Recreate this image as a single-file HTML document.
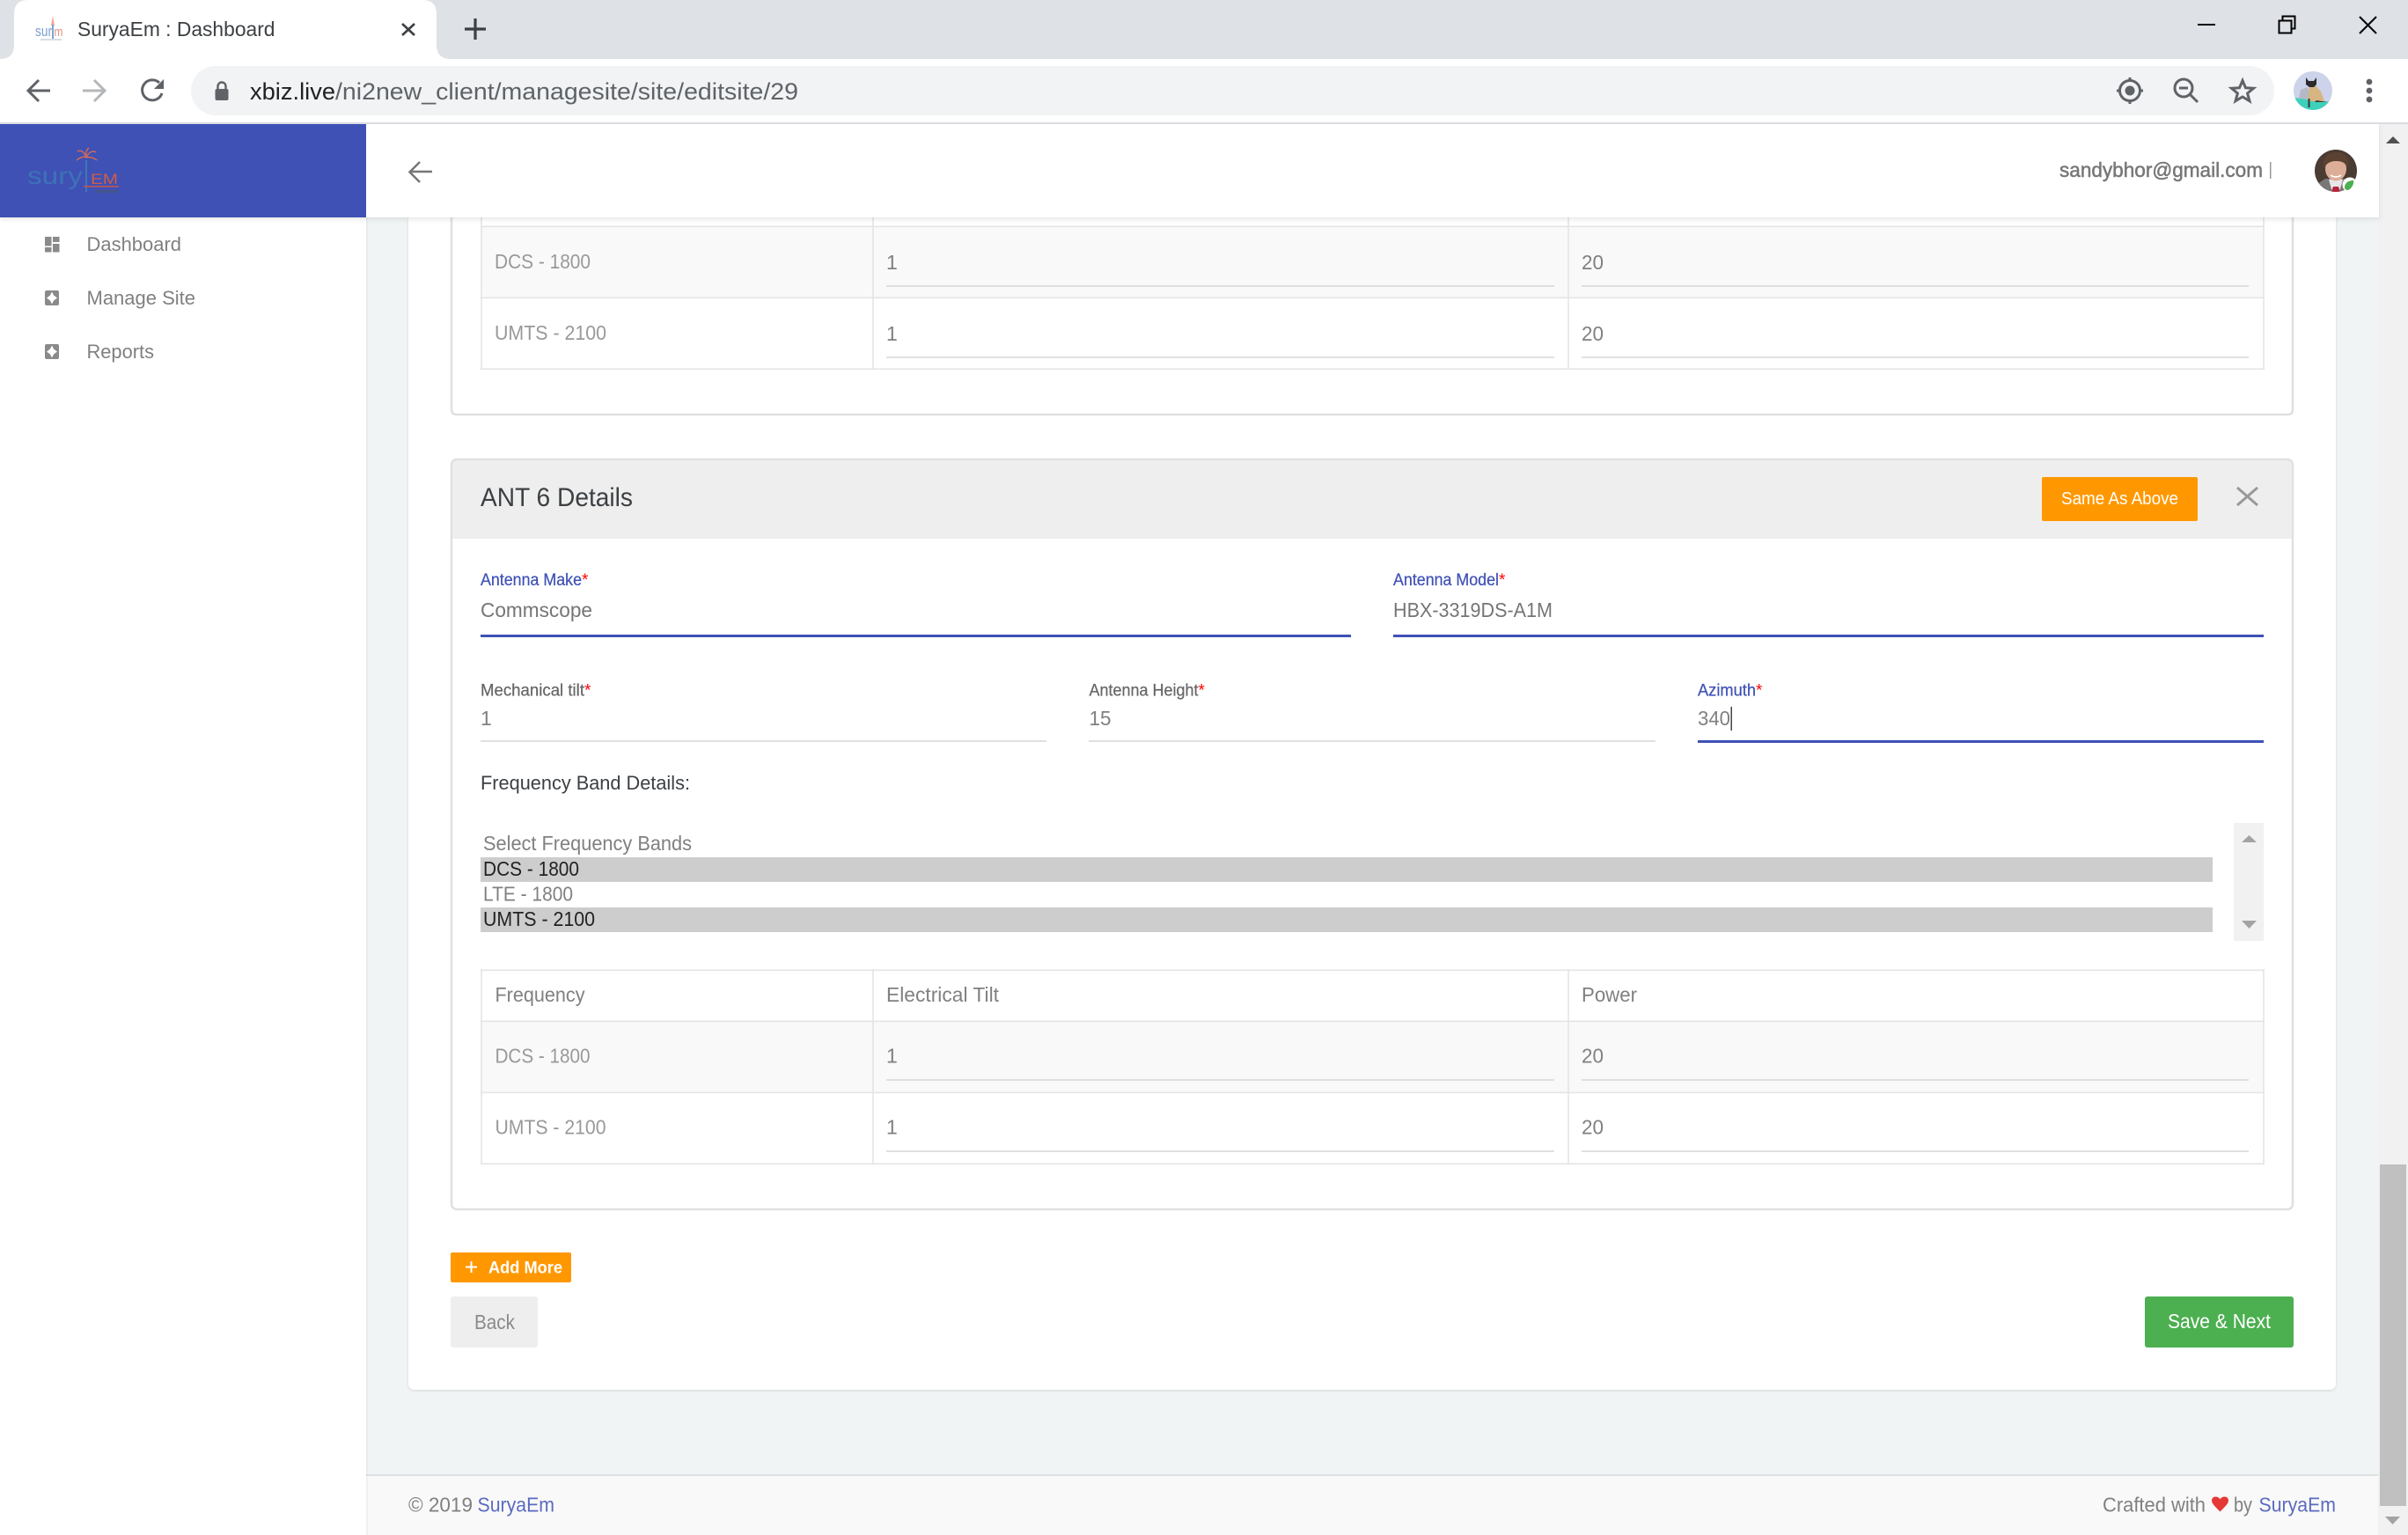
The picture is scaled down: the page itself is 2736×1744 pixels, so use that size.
<!DOCTYPE html>
<html lang="en"><head><meta charset="utf-8"><title>SuryaEm : Dashboard</title>
<style>
html,body{margin:0;padding:0;width:2736px;height:1744px;overflow:hidden;background:#f1f4f5}
svg{display:block}
text{font-family:"Liberation Sans",sans-serif;white-space:pre}
.g{fill:#808080}.l{fill:#999}.d{fill:#3c4043}.b{fill:#3f51b5}.r{fill:#f00}.w{fill:#fff}.m{fill:#666}.k{fill:#222}
.ln{fill:#e0e0e0}.tl{fill:#e4e4e4}
.lb{stroke:currentColor;stroke-width:.25}
</style></head><body>
<svg xmlns="http://www.w3.org/2000/svg" width="2736" height="1744" viewBox="0 0 2736 1744">
<defs>
<filter id="s1" x="-2%" y="-20%" width="104%" height="150%"><feDropShadow dx="0" dy="2" stdDeviation="3" flood-color="#000" flood-opacity=".1"/></filter>
<filter id="s2" x="-2%" y="-2%" width="104%" height="104%"><feDropShadow dx="0" dy="1" stdDeviation="1.5" flood-color="#000" flood-opacity=".12"/></filter>
<clipPath id="cat"><circle cx="2628" cy="103" r="22"/></clipPath>
<clipPath id="per"><circle cx="2654" cy="194" r="24"/></clipPath>
</defs>

<!-- page background -->
<rect x="0" y="141" width="2736" height="1603" fill="#f1f4f5"/>

<!-- main card -->
<rect x="464" y="100" width="2190" height="1479" rx="7" fill="#fff" filter="url(#s2)"/>

<!-- upper panel -->
<path d="M513 200V465q0 6 6 6H2599q6 0 6-6V200" fill="#fff" stroke="#e0e0e0" stroke-width="2.5"/>
<rect x="546" y="258" width="2026" height="80" fill="#f9f9f9"/>
<g class="tl">
<rect x="546" y="256.5" width="2027" height="1.6"/><rect x="546" y="337.5" width="2027" height="1.6"/><rect x="546" y="418.5" width="2027" height="1.6"/>
<rect x="546.2" y="200" width="1.6" height="220"/><rect x="991.2" y="200" width="1.6" height="220"/><rect x="1781.2" y="200" width="1.6" height="220"/><rect x="2571.2" y="200" width="1.6" height="220"/>
</g>
<text class="l" x="562" y="305" font-size="23" textLength="109" lengthAdjust="spacingAndGlyphs">DCS - 1800</text>
<text class="l" x="562" y="386" font-size="23" textLength="127" lengthAdjust="spacingAndGlyphs">UMTS - 2100</text>
<text class="g" x="1007" y="306" font-size="23">1</text>
<text class="g" x="1007" y="387" font-size="23">1</text>
<text class="g" x="1797" y="306" font-size="23" textLength="25" lengthAdjust="spacingAndGlyphs">20</text>
<text class="g" x="1797" y="387" font-size="23" textLength="25" lengthAdjust="spacingAndGlyphs">20</text>
<g fill="#e0e0e0">
<rect x="1007" y="324" width="759" height="2"/><rect x="1797" y="324" width="758" height="2"/>
<rect x="1007" y="405" width="759" height="2"/><rect x="1797" y="405" width="758" height="2"/>
</g>

<!-- ANT 6 panel -->
<rect x="513" y="522" width="2092" height="852" rx="6" fill="#fff" stroke="#e0e0e0" stroke-width="2.5"/>
<path d="M514 612V529q0-6 6-6H2598q6 0 6 6V612Z" fill="#eee"/>
<text class="d" x="546" y="575" font-size="30" textLength="173" lengthAdjust="spacingAndGlyphs">ANT 6 Details</text>
<rect x="2320" y="542" width="177" height="50" rx="2" fill="#ff9800"/>
<text class="w" x="2342" y="573" font-size="20" textLength="133" lengthAdjust="spacingAndGlyphs">Same As Above</text>
<path d="M2542 554L2565 574M2565 554L2542 574" stroke="#999" stroke-width="3" fill="none"/>

<text class="b lb" style="color:#3f51b5" x="546" y="665" font-size="19" textLength="115" lengthAdjust="spacingAndGlyphs">Antenna Make</text>
<text class="r" x="661" y="665" font-size="19">*</text>
<text class="m" x="546" y="701" font-size="23" textLength="127" lengthAdjust="spacingAndGlyphs" fill-opacity=".9">Commscope</text>
<rect x="546" y="721" width="989" height="3" class="b"/>
<text class="b lb" style="color:#3f51b5" x="1583" y="665" font-size="19" textLength="120" lengthAdjust="spacingAndGlyphs">Antenna Model</text>
<text class="r" x="1703" y="665" font-size="19">*</text>
<text class="m" x="1583" y="701" font-size="23" textLength="181" lengthAdjust="spacingAndGlyphs" fill-opacity=".9">HBX-3319DS-A1M</text>
<rect x="1583" y="721" width="989" height="3" class="b"/>

<text class="m lb" style="color:#666" x="546" y="790.5" font-size="19" textLength="118" lengthAdjust="spacingAndGlyphs">Mechanical tilt</text>
<text class="r" x="664" y="790.5" font-size="19">*</text>
<text class="g" x="546" y="824" font-size="23">1</text>
<rect x="546" y="841" width="643" height="2" fill="#e0e0e0"/>
<text class="m lb" style="color:#666" x="1237.5" y="790.5" font-size="19" textLength="124" lengthAdjust="spacingAndGlyphs">Antenna Height</text>
<text class="r" x="1361.5" y="790.5" font-size="19">*</text>
<text class="g" x="1237.5" y="824" font-size="23" textLength="25" lengthAdjust="spacingAndGlyphs">15</text>
<rect x="1237" y="841" width="644" height="2" fill="#e0e0e0"/>
<text class="b lb" style="color:#3f51b5" x="1929" y="790.5" font-size="19" textLength="66" lengthAdjust="spacingAndGlyphs">Azimuth</text>
<text class="r" x="1995" y="790.5" font-size="19">*</text>
<text class="g" x="1929" y="824" font-size="23" textLength="37" lengthAdjust="spacingAndGlyphs">340</text>
<rect x="1966.5" y="803" width="1.5" height="27" fill="#444"/>
<rect x="1929" y="841" width="643" height="3" class="b"/>

<text class="d" x="546" y="897" font-size="22.5" textLength="238" lengthAdjust="spacingAndGlyphs">Frequency Band Details:</text>

<rect x="546" y="974" width="1968" height="28" fill="#cdcdcd"/>
<rect x="546" y="1031" width="1968" height="28" fill="#cdcdcd"/>
<text class="g" x="549" y="966" font-size="23" textLength="237" lengthAdjust="spacingAndGlyphs">Select Frequency Bands</text>
<text class="k" x="549" y="995" font-size="23" textLength="109" lengthAdjust="spacingAndGlyphs">DCS - 1800</text>
<text class="g" x="549" y="1023.5" font-size="23" textLength="102" lengthAdjust="spacingAndGlyphs">LTE - 1800</text>
<text class="k" x="549" y="1052" font-size="23" textLength="127" lengthAdjust="spacingAndGlyphs">UMTS - 2100</text>
<rect x="2538" y="935" width="34" height="134" fill="#f1f1f1"/>
<path d="M2547 957L2555.5 949L2564 957Z" fill="#a3a3a3"/>
<path d="M2547 1046L2555.5 1055L2564 1046Z" fill="#a3a3a3"/>

<!-- lower table -->
<rect x="546" y="1160" width="2026" height="80" fill="#f9f9f9"/>
<g class="tl">
<rect x="546" y="1101.5" width="2027" height="1.6"/><rect x="546" y="1159.5" width="2027" height="1.6"/><rect x="546" y="1240.5" width="2027" height="1.6"/><rect x="546" y="1321.5" width="2027" height="1.6"/>
<rect x="546.2" y="1101" width="1.6" height="222"/><rect x="991.2" y="1101" width="1.6" height="222"/><rect x="1781.2" y="1101" width="1.6" height="222"/><rect x="2571.2" y="1101" width="1.6" height="222"/>
</g>
<text class="g" x="562.5" y="1138" font-size="23" textLength="102" lengthAdjust="spacingAndGlyphs">Frequency</text>
<text class="g" x="1007" y="1138" font-size="23" textLength="128" lengthAdjust="spacingAndGlyphs">Electrical Tilt</text>
<text class="g" x="1797" y="1138" font-size="23" textLength="63" lengthAdjust="spacingAndGlyphs">Power</text>
<text class="l" x="562.5" y="1207.5" font-size="23" textLength="108" lengthAdjust="spacingAndGlyphs">DCS - 1800</text>
<text class="l" x="562.5" y="1288.5" font-size="23" textLength="126" lengthAdjust="spacingAndGlyphs">UMTS - 2100</text>
<text class="g" x="1007" y="1207.5" font-size="23">1</text>
<text class="g" x="1007" y="1288.5" font-size="23">1</text>
<text class="g" x="1797" y="1207.5" font-size="23" textLength="25" lengthAdjust="spacingAndGlyphs">20</text>
<text class="g" x="1797" y="1288.5" font-size="23" textLength="25" lengthAdjust="spacingAndGlyphs">20</text>
<g fill="#e0e0e0">
<rect x="1007" y="1226" width="759" height="2"/><rect x="1797" y="1226" width="758" height="2"/>
<rect x="1007" y="1307" width="759" height="2"/><rect x="1797" y="1307" width="758" height="2"/>
</g>

<!-- buttons -->
<rect x="512" y="1423" width="137" height="34" rx="2" fill="#ff9800"/>
<path d="M535.5 1433v13M529 1439.5h13" stroke="#fff" stroke-width="2" fill="none"/>
<text class="w" x="555" y="1446.5" font-size="19" font-weight="700" textLength="84" lengthAdjust="spacingAndGlyphs">Add More</text>
<rect x="512" y="1473" width="99" height="58" rx="3" fill="#eee"/>
<text x="539" y="1510" font-size="23" fill="#8a8a8a" textLength="46" lengthAdjust="spacingAndGlyphs">Back</text>
<rect x="2437" y="1473" width="169" height="58" rx="3" fill="#4caf50"/>
<text class="w" x="2463" y="1509" font-size="23" textLength="117" lengthAdjust="spacingAndGlyphs">Save &amp; Next</text>

<!-- footer -->
<rect x="416" y="1677" width="2286" height="67" fill="#f9f9f9"/>
<rect x="416" y="1675" width="2286" height="2" fill="#dfe2e5"/>
<text class="g" x="464" y="1717.5" font-size="23" textLength="73" lengthAdjust="spacingAndGlyphs">© 2019</text>
<text class="b" x="542.5" y="1717.5" font-size="23" textLength="87.5" lengthAdjust="spacingAndGlyphs" fill-opacity=".85">SuryaEm</text>
<text class="g" x="2389" y="1717.5" font-size="23" textLength="117" lengthAdjust="spacingAndGlyphs">Crafted with</text>
<path d="M2522.5 1717.5C2517 1712 2513 1708 2513 1705C2513 1702 2515 1700.5 2517.5 1700.5C2519.5 1700.5 2521.5 1701.5 2522.5 1703.5C2523.5 1701.5 2525.5 1700.5 2527.5 1700.5C2530 1700.5 2532 1702 2532 1705C2532 1708 2528 1712 2522.5 1717.5Z" fill="#e53935"/>
<text class="g" x="2538" y="1717.5" font-size="23" textLength="21" lengthAdjust="spacingAndGlyphs">by</text>
<text class="b" x="2566.5" y="1717.5" font-size="23" textLength="87.5" lengthAdjust="spacingAndGlyphs" fill-opacity=".85">SuryaEm</text>

<!-- page scrollbar -->
<rect x="2702" y="141" width="34" height="1603" fill="#f1f1f1"/>
<rect x="2704" y="1323" width="30" height="388" fill="#c0c0c0"/>
<path d="M2711 163L2719 155L2727 163Z" fill="#505050"/>
<path d="M2710 1723L2718.5 1732L2727 1723Z" fill="#a3a3a3"/>

<!-- sidebar -->
<rect x="0" y="141" width="416" height="1603" fill="#fff"/>
<rect x="416" y="247" width="2" height="1497" fill="#000" opacity=".03"/>
<g fill="#8a8a8a">
<rect x="51" y="269" width="7.5" height="10.5"/><rect x="60" y="269" width="7.5" height="6"/><rect x="51" y="281" width="7.5" height="5.5"/><rect x="60" y="277" width="7.5" height="9.5"/>
<path id="mi" d="M53 330H65q2 0 2 2V345q0 2-2 2H53q-2 0-2-2V332q0-2 2-2ZM59 331.5L57 335.5L53 338.5L57 341.5L59 345.5L61 341.5L65 338.5L61 335.5Z" fill-rule="evenodd"/>
<path d="M53 391H65q2 0 2 2V406q0 2-2 2H53q-2 0-2-2V393q0-2 2-2ZM59 392.5L57 396.5L53 399.5L57 402.5L59 406.5L61 402.5L65 399.5L61 396.5Z" fill-rule="evenodd"/>
</g>
<text class="g" x="98.5" y="285" font-size="22.5" textLength="107.5" lengthAdjust="spacingAndGlyphs">Dashboard</text>
<text class="g" x="98.5" y="346" font-size="22.5" textLength="123.5" lengthAdjust="spacingAndGlyphs">Manage Site</text>
<text class="g" x="98.5" y="407" font-size="22.5" textLength="76.5" lengthAdjust="spacingAndGlyphs">Reports</text>

<!-- app header -->
<rect x="0" y="141" width="2703" height="106" fill="#fff" filter="url(#s1)"/>
<rect x="0" y="141" width="416" height="106" fill="#3f51b5"/>
<!-- logo -->
<g>
<path d="M98 182L98 218" stroke="#3d78b8" stroke-width="2"/>
<path d="M98 179C96 172 91 170 88 172M98 179C95 177 91 179 87 182M98 179C97 173 98 170 101 168M98 179C101 172 106 171 109 173M98 179C102 178 106 179 110 182" stroke="#cf6a58" stroke-width="1.5" fill="none"/>
<text x="31" y="209" font-size="28" fill="#3d78b8" textLength="63" lengthAdjust="spacingAndGlyphs" opacity=".85">sury</text>
<text x="103" y="209" font-size="17" fill="#cf5c48" textLength="31" lengthAdjust="spacingAndGlyphs">EM</text>
<rect x="95" y="211" width="40" height="1.6" fill="#c05650"/>
<rect x="108" y="216" width="26" height="3" fill="#46558a"/>
</g>
<path d="M491 195H466M477 184L465.5 195.5L477 207" fill="none" stroke="#777" stroke-width="2.5"/>
<text x="2340" y="201" font-size="23" fill="#777" stroke="#777" stroke-width=".5" textLength="231" lengthAdjust="spacingAndGlyphs">sandybhor@gmail.com</text>
<rect x="2579" y="184" width="1.5" height="19" fill="#999"/>
<!-- user photo -->
<g clip-path="url(#per)">
<rect x="2630" y="170" width="48" height="48" fill="#4a3b33"/>
<path d="M2630 218V211L2642 203L2666 203L2678 211V218Z" fill="#7a7876"/>
<path d="M2646 204L2662 204L2658 218H2650Z" fill="#e8e6e8"/>
<path d="M2651 212L2657 212L2659 218L2649 218Z" fill="#b5243c"/>
<ellipse cx="2654" cy="192" rx="12" ry="13.5" fill="#dcae98"/>
<path d="M2640 192C2637 176 2649 172 2657 173C2668 174 2670 185 2667 192C2666 185 2661 183 2654 183C2647 183 2643 186 2640 192Z" fill="#5a4131"/>
<path d="M2648 199Q2654 203 2660 199" stroke="#fff" stroke-width="1.6" fill="none"/>
</g>
<circle cx="2670" cy="210" r="8.5" fill="#fff"/>
<path d="M2664 213C2664 208 2668 205 2674 205C2675 209 2672 214 2668 216C2666 216 2664 215 2664 213Z" fill="#4caf50"/>

<!-- browser chrome -->
<rect x="0" y="0" width="2736" height="67" fill="#dee1e6"/>
<rect x="0" y="67" width="2736" height="72" fill="#fff"/>
<rect x="0" y="139" width="2736" height="2" fill="#dadce0"/>
<path d="M0 67Q16 67 16 51V16Q16 0 32 0H480Q496 0 496 16V51Q496 67 512 67Z" fill="#fff"/>
<g>
<path d="M60 18L62 29L58 29Z" fill="#f0a890"/>
<path d="M60 28V46" stroke="#7ba5d0" stroke-width="2"/>
<text x="40" y="41" font-size="17" fill="#7d9fd0" textLength="19" lengthAdjust="spacingAndGlyphs">sur</text>
<text x="61.5" y="41" font-size="15" fill="#e0917c" textLength="10" lengthAdjust="spacingAndGlyphs">m</text>
<rect x="46" y="44" width="24" height="2" fill="#d8dce4"/>
</g>
<text class="d" x="88" y="41" font-size="23.5" textLength="224.5" lengthAdjust="spacingAndGlyphs">SuryaEm : Dashboard</text>
<path d="M457 27L471 40M471 27L457 40" stroke="#3c4043" stroke-width="2.6" fill="none"/>
<path d="M540 21V45M528 33H552" stroke="#3c4043" stroke-width="3.2" fill="none"/>
<path d="M2497 28H2517" stroke="#000" stroke-width="2" fill="none"/>
<path d="M2589.5 23.5H2603.5V37.5H2589.5ZM2593.5 23V18.5H2607.5V32.5H2604" stroke="#000" stroke-width="2" fill="none"/>
<path d="M2681 19L2700 38M2700 19L2681 38" stroke="#000" stroke-width="2" fill="none"/>

<path d="M57 103H33M44 91L32 103L44 115" fill="none" stroke="#5f6368" stroke-width="3"/>
<path d="M94 103H119M107 91L119 103L107 115" fill="none" stroke="#b4b7ba" stroke-width="3"/>
<path d="M184 106A11.5 11.5 0 1 1 181 94" fill="none" stroke="#5f6368" stroke-width="3"/>
<path d="M186 90V101H175Z" fill="#5f6368"/>

<rect x="217" y="75" width="2367" height="56" rx="28" fill="#f1f3f4"/>
<rect x="244.5" y="101" width="15" height="13" rx="2" fill="#5f6368"/>
<path d="M247.5 101V98a4.5 4.5 0 0 1 9 0v3" fill="none" stroke="#5f6368" stroke-width="2.4"/>
<text x="284" y="113" font-size="27" fill="#202124" textLength="97" lengthAdjust="spacingAndGlyphs">xbiz.live</text>
<text x="381" y="113" font-size="27" fill="#5f6368" textLength="526" lengthAdjust="spacingAndGlyphs">/ni2new_client/managesite/site/editsite/29</text>

<circle cx="2420" cy="103" r="11.5" fill="none" stroke="#5f6368" stroke-width="3"/>
<circle cx="2420" cy="103" r="5.5" fill="#5f6368"/>
<path d="M2420 88V93M2420 113V118M2405 103H2410M2430 103H2435" stroke="#5f6368" stroke-width="3"/>
<circle cx="2481" cy="100" r="10" fill="none" stroke="#5f6368" stroke-width="3"/>
<path d="M2476 100H2486M2488.5 107.5L2497 116" stroke="#5f6368" stroke-width="3" fill="none"/>
<path d="M2548 91.5L2551.5 99.8L2560.5 100.3L2553.6 106L2556 114.8L2548 110L2540 114.8L2542.4 106L2535.5 100.3L2544.5 99.8Z" fill="none" stroke="#5f6368" stroke-width="3" stroke-linejoin="miter"/>

<g clip-path="url(#cat)">
<rect x="2606" y="81" width="44" height="44" fill="#ccd3ea"/>
<path d="M2606 111L2650 116V125H2606Z" fill="#3ed0ba"/>
<path d="M2612 112L2614 102L2622 99L2625 112Z" fill="#b5b8c6"/>
<path d="M2624 96L2630 96L2637 104L2641 115H2622Z" fill="#d6b583"/>
<path d="M2620 88L2623 92H2629L2632 88L2632 96L2629 99H2624L2620 96Z" fill="#2c2a2c"/>
<path d="M2622.5 112H2624.5L2624.5 122H2622.5ZM2632 114L2644 116H2630Z" fill="#3a3630"/>
</g>
<circle cx="2692" cy="93" r="3.4" fill="#5f6368"/><circle cx="2692" cy="103" r="3.4" fill="#5f6368"/><circle cx="2692" cy="113" r="3.4" fill="#5f6368"/>
</svg>
</body></html>
